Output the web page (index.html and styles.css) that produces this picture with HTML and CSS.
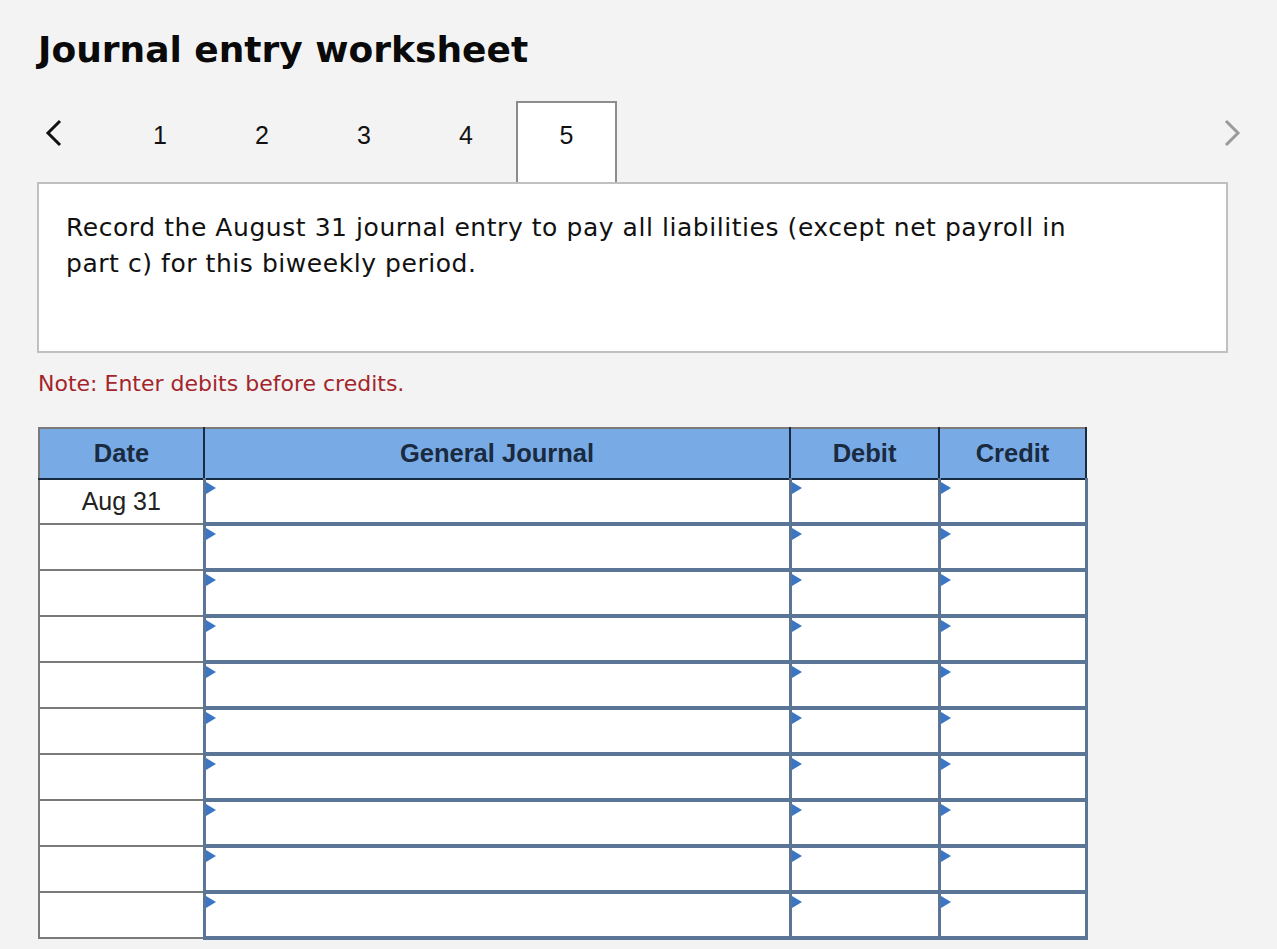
FILE: index.html
```html
<!DOCTYPE html>
<html>
<head>
<meta charset="utf-8">
<link rel="stylesheet" href="styles.css">
</head>
<body>
<div class="page">
  <h1 class="title">Journal entry worksheet</h1>
  <div class="nav">
    <span class="chev chev-left"><svg width="20" height="28" viewBox="0 0 20 28"><polyline points="16,2 4,14 16,26" fill="none" stroke="#111" stroke-width="3"/></svg></span>
    <div class="tabs">
      <span class="tab">1</span>
      <span class="tab">2</span>
      <span class="tab">3</span>
      <span class="tab">4</span>
      <span class="tab active">5</span>
    </div>
    <span class="chev chev-right"><svg width="20" height="28" viewBox="0 0 20 28"><polyline points="4,2 16,14 4,26" fill="none" stroke="#9a9a9a" stroke-width="3"/></svg></span>
  </div>
  <div class="question">
    <p>Record the August 31 journal entry to pay all liabilities (except net payroll in part c) for this biweekly period.</p>
  </div>
  <p class="note">Note: Enter debits before credits.</p>
  <table class="journal">
    <colgroup>
      <col class="c-date"><col class="c-gj"><col class="c-debit"><col class="c-credit">
    </colgroup>
    <thead>
      <tr><th>Date</th><th>General Journal</th><th>Debit</th><th>Credit</th></tr>
    </thead>
    <tbody>
      <tr><td class="date">Aug 31</td><td class="inp"><span class="tri"></span></td><td class="inp"><span class="tri"></span></td><td class="inp"><span class="tri"></span></td></tr>
      <tr><td class="date"></td><td class="inp"><span class="tri"></span></td><td class="inp"><span class="tri"></span></td><td class="inp"><span class="tri"></span></td></tr>
      <tr><td class="date"></td><td class="inp"><span class="tri"></span></td><td class="inp"><span class="tri"></span></td><td class="inp"><span class="tri"></span></td></tr>
      <tr><td class="date"></td><td class="inp"><span class="tri"></span></td><td class="inp"><span class="tri"></span></td><td class="inp"><span class="tri"></span></td></tr>
      <tr><td class="date"></td><td class="inp"><span class="tri"></span></td><td class="inp"><span class="tri"></span></td><td class="inp"><span class="tri"></span></td></tr>
      <tr><td class="date"></td><td class="inp"><span class="tri"></span></td><td class="inp"><span class="tri"></span></td><td class="inp"><span class="tri"></span></td></tr>
      <tr><td class="date"></td><td class="inp"><span class="tri"></span></td><td class="inp"><span class="tri"></span></td><td class="inp"><span class="tri"></span></td></tr>
      <tr><td class="date"></td><td class="inp"><span class="tri"></span></td><td class="inp"><span class="tri"></span></td><td class="inp"><span class="tri"></span></td></tr>
      <tr><td class="date"></td><td class="inp"><span class="tri"></span></td><td class="inp"><span class="tri"></span></td><td class="inp"><span class="tri"></span></td></tr>
      <tr><td class="date"></td><td class="inp"><span class="tri"></span></td><td class="inp"><span class="tri"></span></td><td class="inp"><span class="tri"></span></td></tr>
    </tbody>
  </table>
</div>
</body>
</html>
```

FILE: styles.css
```css
html, body {
  margin: 0;
  padding: 0;
  background: #f3f3f3;
}
.page {
  padding: 0 0 0 37px;
  font-family: "DejaVu Sans", Verdana, sans-serif;
  color: #111;
}
.title {
  margin: 0;
  padding-top: 27px;
  height: 101px;
  box-sizing: border-box;
  font-family: "DejaVu Sans", Verdana, sans-serif;
  font-weight: bold;
  font-size: 36px;
  line-height: 46px;
  padding-left: 1px;
  color: #0a0a0a;
}
.nav {
  display: flex;
  align-items: flex-start;
  width: 1205px;
  height: 81px;
}
.chev {
  display: flex;
  margin-top: 18px;
}
.chev-left {
  margin-left: 7px;
  width: 65px;
}
.tabs {
  display: flex;
  flex: 1;
  height: 81px;
}
.tab {
  width: 102px;
  height: 81px;
  box-sizing: border-box;
  display: flex;
  justify-content: center;
  padding-top: 20px;
  font-family: "Liberation Sans", Arial, sans-serif;
  font-size: 25px;
  line-height: 28px;
  color: #111;
}
.tab.active {
  width: 101px;
  background: #fff;
  border: 2px solid #8c8c8c;
  border-bottom: none;
  padding-top: 18px;
  position: relative;
  z-index: 1;
  margin-left: -1px;
}
.question {
  width: 1191px;
  height: 171px;
  box-sizing: border-box;
  background: #fff;
  border: 2px solid #c0c0c0;
  padding: 26px 27px 0;
}
.question p {
  margin: 0;
  font-size: 25px;
  letter-spacing: 0.55px;
  line-height: 36px;
  width: 1015px;
  color: #111;
}
.note {
  margin: 17px 0 0 1px;
  font-size: 22px;
  line-height: 28px;
  color: #a3252b;
}
.journal {
  margin-top: 29px;
  margin-left: 1px;
  border-collapse: collapse;
  table-layout: fixed;
  font-family: "Liberation Sans", Arial, sans-serif;
}
.c-date { width: 165px; }
.c-gj { width: 586px; }
.c-debit { width: 149px; }
.c-credit { width: 147px; }
.journal th {
  height: 49px;
  padding: 0;
  background: #78abe5;
  color: #1a2a40;
  font-size: 25.5px;
  font-weight: bold;
  border: 2px solid #1a2a40;
  border-top-color: #7a7a7a;
}
.journal th:first-child {
  border-left-color: #7a7a7a;
}
.journal td {
  height: 42px;
  padding: 0;
  background: #fff;
}
.journal td.date {
  border: 2px solid #7a7a7a;
  text-align: center;
  vertical-align: top;
  font-size: 25px;
  line-height: 42px;
  color: #222;
}
.journal td.inp {
  border-left: 3px solid #5a7596;
  border-right: 3px solid #5a7596;
  border-top: 4px solid #5a7596;
  border-bottom: 4px solid #5a7596;
  vertical-align: top;
}
.journal tbody tr:first-child td.inp {
  border-top-width: 2px;
}
.tri {
  display: block;
  width: 0;
  height: 0;
  margin-top: 2px;
  border-top: 6px solid transparent;
  border-bottom: 6px solid transparent;
  border-left: 10px solid #3b76c4;
}
```
